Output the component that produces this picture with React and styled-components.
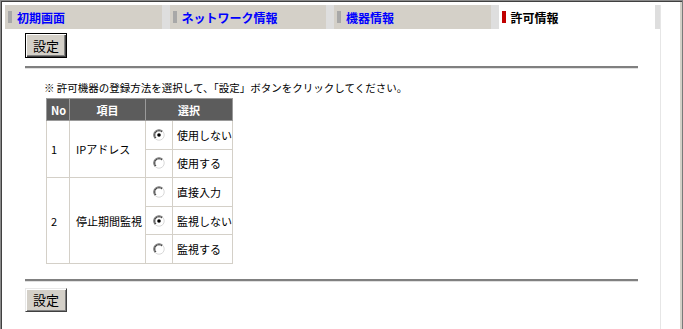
import React from 'react';
import styled, {createGlobalStyle} from 'styled-components';

const GlobalStyle = createGlobalStyle`
  html, body {
    margin: 0;
    padding: 0;
    background: #fff;
  }
  body {
    font-family: "Noto Sans CJK JP", "Liberation Sans", sans-serif;
  }
`

const Frame = styled.div`
  width: 683px;
  height: 329px;
  box-sizing: border-box;
  overflow: hidden;
  background: #fff;
  border-top: 1px solid #8a8a8a;
  border-left: 1px solid #8a8a8a;
  border-right: 1px solid #7a7a7a;
  box-shadow: inset 1px 1px 0 #404040, inset -2px 0 0 #d4d0c8;
  padding: 4px 0 0 4px;
`

const Page = styled.div`
  width: 656px;
  min-height: 330px;
  box-sizing: border-box;
  border-right: 1px solid #e6e6e6;
`

const TabRow = styled.div`
  display: flex;
  gap: 8px;
  height: 24px;
  width: 655px;
  padding-right: 5px;
  box-sizing: border-box;
  background: #dedede;
`

const Tab = styled.div`
  flex: 1;
  display: flex;
  align-items: center;
  gap: 5px;
  padding-left: 3px;
  background: ${p => p.active ? '#fff' : '#d4d0c8'};
  color: ${p => p.active ? '#000' : '#0000ff'};
  font-size: 12px;
  font-weight: bold;
  cursor: pointer;
`

const TabMark = styled.span`
  width: 4px;
  height: 12px;
  background: ${p => p.active ? '#c00000' : '#a8a8a8'};
`

const Content = styled.div`
  padding: 4px 0 0 20px;
`

const Button = styled.button`
  display: block;
  width: 42px;
  height: ${p => p.primary ? 25 : 24}px;
  padding: 0;
  margin: 0;
  box-sizing: border-box;
  background: #d4d0c8;
  font-family: "Noto Sans CJK JP", sans-serif;
  font-size: 13px;
  color: #000;
  border: 1px solid #000;
  box-shadow: inset 1px 1px 0 #fff, inset -1px -1px 0 #404040, inset -2px -2px 0 #808080;
  ${p => !p.primary && `
    border-color: #e8e8e8 #404040 #404040 #e8e8e8;
    box-shadow: inset 1px 1px 0 #fff, inset -1px -1px 0 #808080;
  `}
`

const Rule = styled.div`
  width: 613px;
  height: 2px;
  background: #808080;
  border-bottom: 1px solid #e0e0e0;
  margin-top: ${p => p.top}px;
  margin-bottom: ${p => p.bottom}px;
`

const Note = styled.p`
  margin: 0 0 3px 19px;
  font-size: 10.5px;
  line-height: 14px;
  color: #000;
`

const Table = styled.table`
  margin-left: 21px;
  border-collapse: collapse;
  font-size: 11px;
  color: #000;
  td, th {
    border: 1px solid #d4d0c8;
    padding: 0;
    white-space: nowrap;
  }
`

const HeadCell = styled.th`
  height: 21px;
  background: #5c5c5c;
  color: #fff;
  font-weight: bold;
  text-align: ${p => p.left ? 'left' : 'center'};
  padding-left: ${p => p.left ? 4 : 0}px !important;
  border-color: #9a9a9a !important;
`

const Row = styled.tr`
  height: 28.6px;
`

const Cell = styled.td`
  width: ${p => p.w}px;
  padding-left: ${p => p.pad || 0}px !important;
  text-align: ${p => p.center ? 'center' : 'left'};
  vertical-align: middle;
`

const Radio = ({checked}) => (
  <svg width="12" height="12" viewBox="0 0 12 12" style={{display: 'block', margin: '0 auto'}}>
    <circle cx="6" cy="6" r="5" fill="#fff"/>
    <path d="M2.3 9.7 A5.2 5.2 0 0 1 9.7 2.3" stroke="#707070" strokeWidth="1.1" fill="none"/>
    <path d="M3 9 A4.2 4.2 0 0 1 9 3" stroke="#303030" strokeWidth="1" fill="none"/>
    <path d="M9.7 2.3 A5.2 5.2 0 0 1 2.3 9.7" stroke="#d8d8d8" strokeWidth="1" fill="none"/>
    {checked && <circle cx="6" cy="6" r="1.8" fill="#000"/>}
  </svg>
)

const tabs = [
  {label: '初期画面'},
  {label: 'ネットワーク情報'},
  {label: '機器情報'},
  {label: '許可情報', active: true},
]

const items = [
  {no: '1', name: 'IPアドレス', options: [
    {label: '使用しない', checked: true},
    {label: '使用する'},
  ]},
  {no: '2', name: '停止期間監視', options: [
    {label: '直接入力'},
    {label: '監視しない', checked: true},
    {label: '監視する'},
  ]},
]

export default function App() {
  return (
    <Frame>
      <GlobalStyle/>
      <Page>
        <TabRow>
          {tabs.map(t => (
            <Tab key={t.label} active={t.active}>
              <TabMark active={t.active}/>
              {t.label}
            </Tab>
          ))}
        </TabRow>
        <Content>
          <Button primary>設定</Button>
          <Rule top={8} bottom={12}/>
          <Note>※ 許可機器の登録方法を選択して、「設定」ボタンをクリックしてください。</Note>
          <Table>
            <thead>
              <tr>
                <HeadCell left style={{width: 18}}>No</HeadCell>
                <HeadCell style={{width: 75}}>項目</HeadCell>
                <HeadCell colSpan={2}>選択</HeadCell>
              </tr>
            </thead>
            <tbody>
              {items.map(item => item.options.map((opt, i) => (
                <Row key={item.no + opt.label}>
                  {i === 0 && <Cell rowSpan={item.options.length} w={18} pad={4}>{item.no}</Cell>}
                  {i === 0 && <Cell rowSpan={item.options.length} w={69} pad={6}>{item.name}</Cell>}
                  <Cell w={26} center><Radio checked={opt.checked}/></Cell>
                  <Cell w={54} pad={4}>{opt.label}</Cell>
                </Row>
              )))}
            </tbody>
          </Table>
          <Rule top={15} bottom={6}/>
          <Button>設定</Button>
        </Content>
      </Page>
    </Frame>
  )
}
